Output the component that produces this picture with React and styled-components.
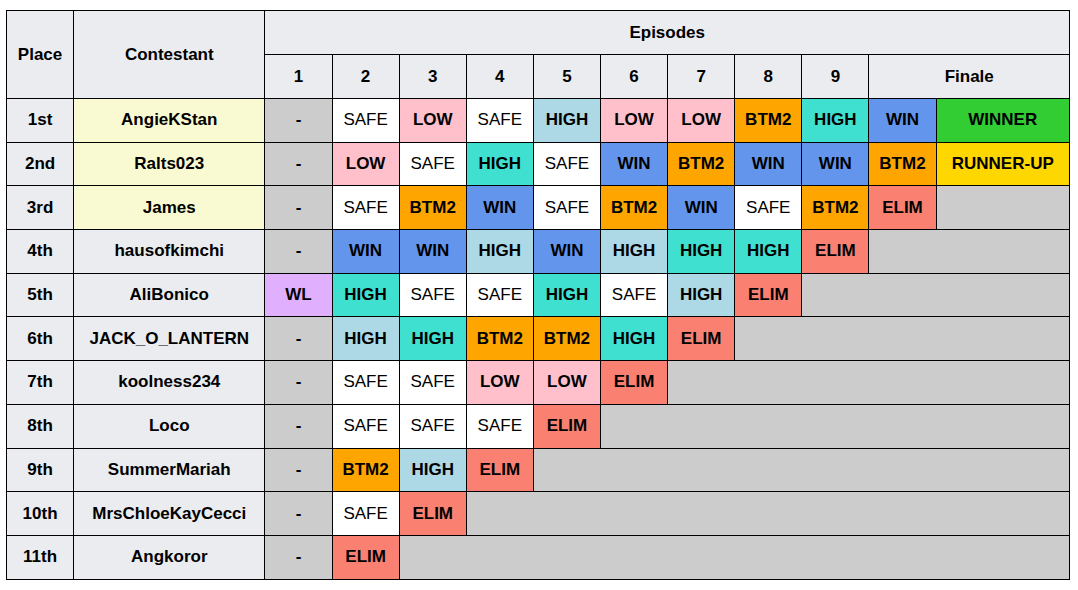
import React from 'react';
import styled, { createGlobalStyle } from 'styled-components';

const GlobalStyle = createGlobalStyle`
	body {
		margin: 0;
		background: #fff;
		font-family: "Liberation Sans", Arial, sans-serif;
	}
`;

// result -> colours
const tones = {
	SAFE: { bg: '#ffffff', bold: false },
	LOW: { bg: '#ffc0cb', bold: true },
	HIGH: { bg: '#add8e6', bold: true },
	TOP: { bg: '#40e0d0', bold: true },
	WIN: { bg: '#6495ed', bold: true },
	BTM2: { bg: '#ffa500', bold: true },
	ELIM: { bg: '#fa8072', bold: true },
	WL: { bg: '#e0b0ff', bold: true },
	WINNER: { bg: '#32cd32', bold: true },
	'RUNNER-UP': { bg: '#ffd700', bold: true },
	'-': { bg: '#cccccc', bold: true },
	NA: { bg: '#cccccc', bold: true },
};

const Page = styled.div`
	padding: 10px 0 0 6px;
`;

const Table = styled.table`
	border-collapse: collapse;
	table-layout: fixed;
	width: 1064px;
	font-size: 17px;
	color: #000;
`;

const Head = styled.th`
	background: #eaecf0;
	border: 1px solid #000;
	font-weight: bold;
	height: 43px;
	padding: 0;
	text-align: center;
`;

const Row = styled.tr`
	height: 43.7px;
`;

const Label = styled.td`
	background: ${(p) => (p.$top ? '#fafad2' : '#eaecf0')};
	border: 1px solid #000;
	font-weight: bold;
	text-align: center;
	padding: 0;
`;

const Result = styled.td`
	background: ${(p) => tones[p.$kind].bg};
	font-weight: ${(p) => (tones[p.$kind].bold ? 'bold' : 'normal')};
	border: 1px solid #000;
	text-align: center;
	padding: 0;
`;

const rows = [
	['1st', 'AngieKStan', ['-', 'SAFE', 'LOW', 'SAFE', 'HIGH', 'LOW', 'LOW', 'BTM2', 'TOP', 'WIN', 'WINNER']],
	['2nd', 'Ralts023', ['-', 'LOW', 'SAFE', 'TOP', 'SAFE', 'WIN', 'BTM2', 'WIN', 'WIN', 'BTM2', 'RUNNER-UP']],
	['3rd', 'James', ['-', 'SAFE', 'BTM2', 'WIN', 'SAFE', 'BTM2', 'WIN', 'SAFE', 'BTM2', 'ELIM']],
	['4th', 'hausofkimchi', ['-', 'WIN', 'WIN', 'HIGH', 'WIN', 'HIGH', 'TOP', 'TOP', 'ELIM']],
	['5th', 'AliBonico', ['WL', 'TOP', 'SAFE', 'SAFE', 'TOP', 'SAFE', 'HIGH', 'ELIM']],
	['6th', 'JACK_O_LANTERN', ['-', 'HIGH', 'TOP', 'BTM2', 'BTM2', 'TOP', 'ELIM']],
	['7th', 'koolness234', ['-', 'SAFE', 'SAFE', 'LOW', 'LOW', 'ELIM']],
	['8th', 'Loco', ['-', 'SAFE', 'SAFE', 'SAFE', 'ELIM']],
	['9th', 'SummerMariah', ['-', 'BTM2', 'HIGH', 'ELIM']],
	['10th', 'MrsChloeKayCecci', ['-', 'SAFE', 'ELIM']],
	['11th', 'Angkoror', ['-', 'ELIM']],
];

const label = (k) => (k === 'TOP' ? 'HIGH' : k === 'NA' ? '' : k);

const App = () => (
	<Page>
		<GlobalStyle />
		<Table>
			<colgroup>
				<col style={{ width: 67 }} />
				<col style={{ width: 191 }} />
				{Array.from({ length: 10 }).map((_, i) => (
					<col key={i} style={{ width: 67 }} />
				))}
				<col style={{ width: 133 }} />
			</colgroup>
			<thead>
				<tr>
					<Head rowSpan={2}>Place</Head>
					<Head rowSpan={2}>Contestant</Head>
					<Head colSpan={11}>Episodes</Head>
				</tr>
				<tr>
					{[1, 2, 3, 4, 5, 6, 7, 8, 9].map((n) => (
						<Head key={n}>{n}</Head>
					))}
					<Head colSpan={2}>Finale</Head>
				</tr>
			</thead>
			<tbody>
				{rows.map(([place, name, res], r) => (
					<Row key={place}>
						<Label>{place}</Label>
						<Label $top={r < 3}>{name}</Label>
						{res.map((k, i) => (
							<Result key={i} $kind={k}>
								{label(k)}
							</Result>
						))}
						{res.length < 11 && <Result $kind="NA" colSpan={11 - res.length} />}
					</Row>
				))}
			</tbody>
		</Table>
	</Page>
);

export default App;
